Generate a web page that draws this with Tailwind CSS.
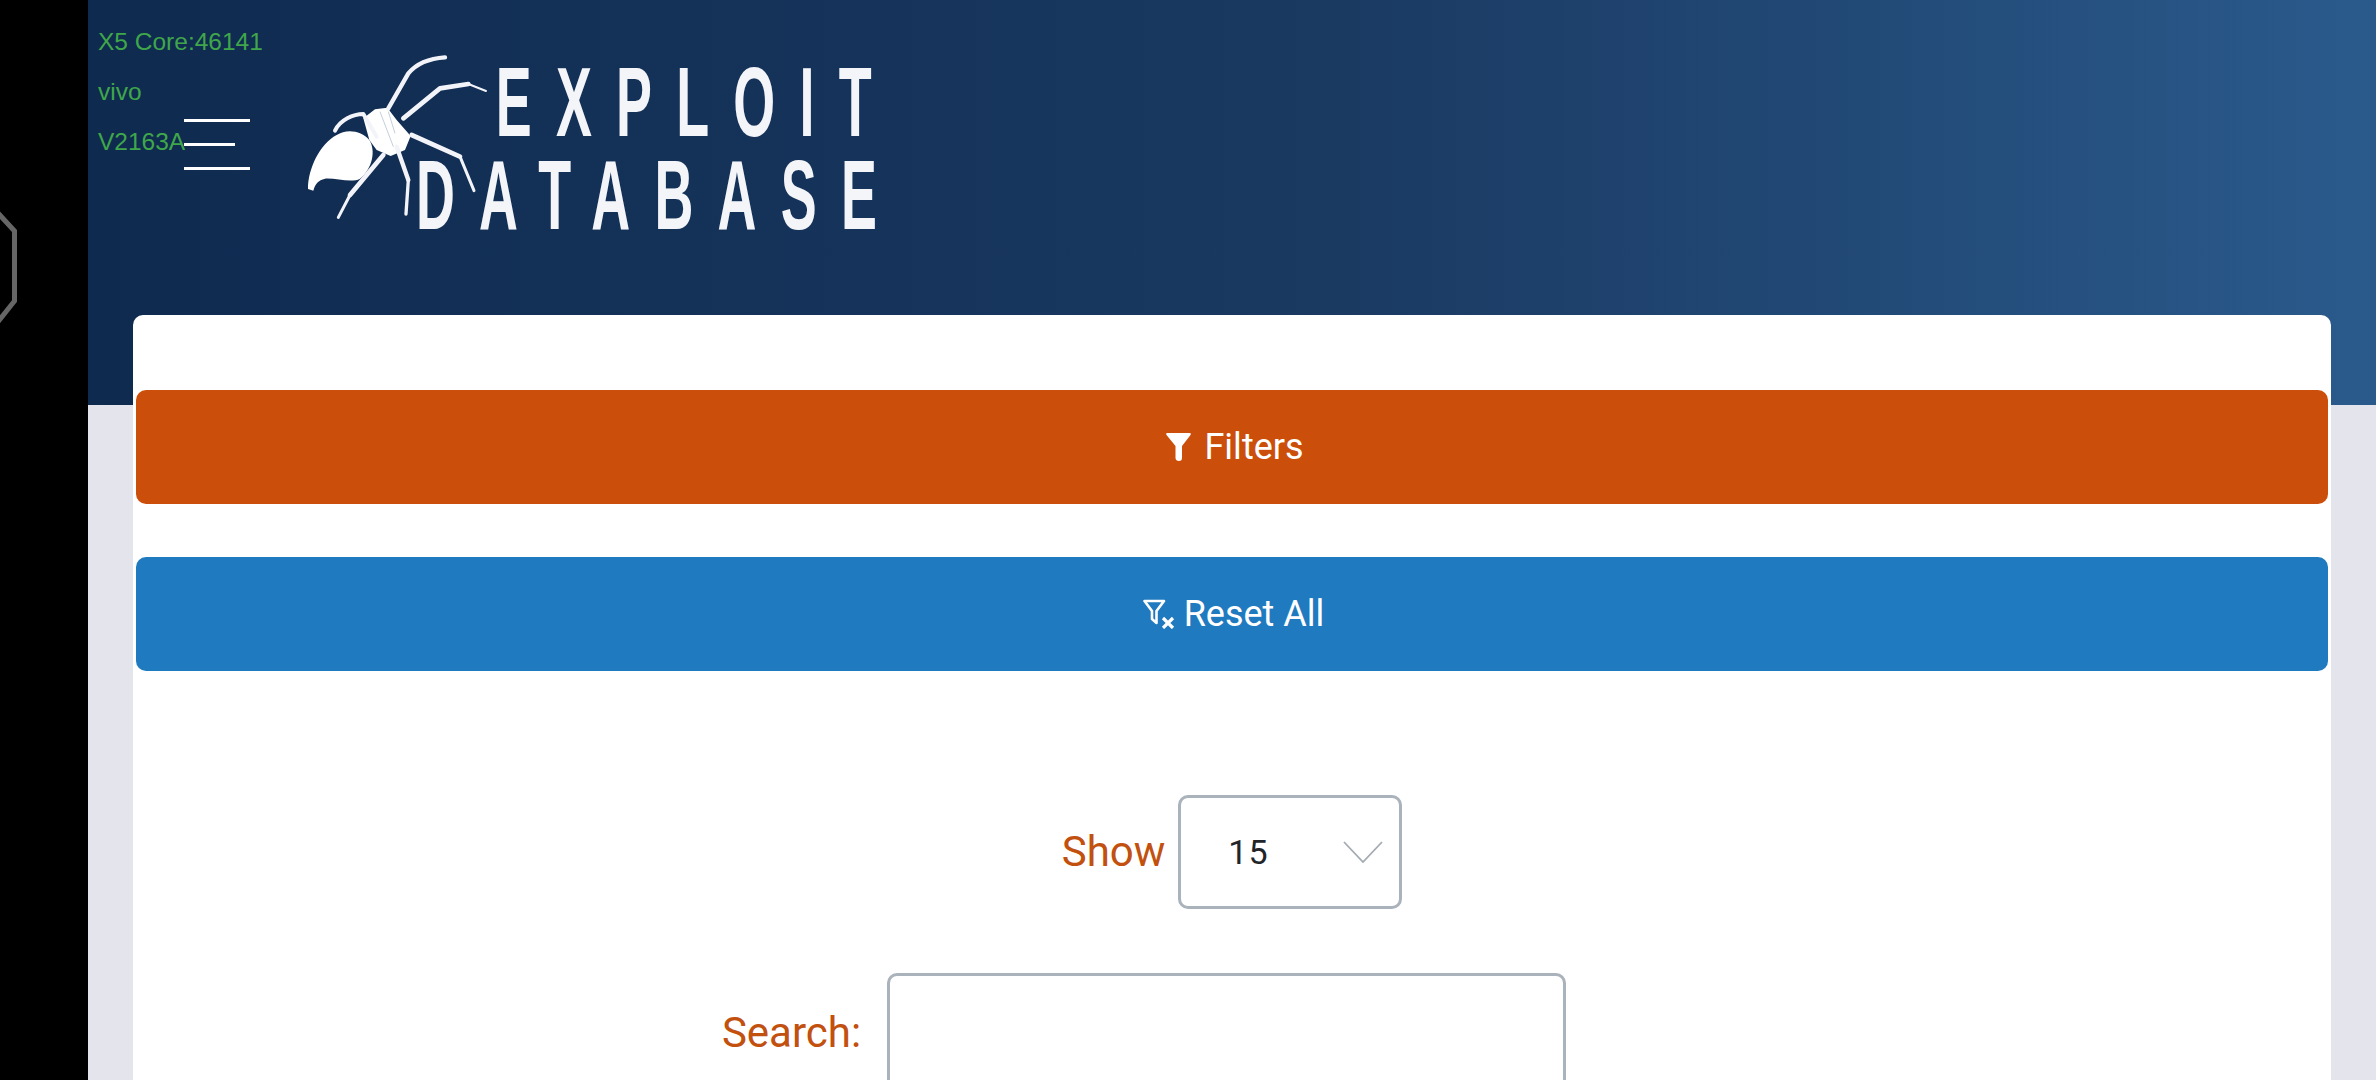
<!doctype html>
<html>
<head>
<meta charset="utf-8">
<script src="https://cdn.jsdelivr.net/npm/@tailwindcss/browser@4"></script>
</head>
<body class="bg-black">
<div class="relative flex h-[1080px] w-[2376px] overflow-hidden bg-black font-['Roboto',sans-serif]">
  <aside class="relative w-[88px] shrink-0 bg-black">
    <svg class="absolute left-0 top-[207px]" width="20" height="125" viewBox="0 0 20 125" fill="none">
      <path d="M-3 5 L14.500 24 L14.500 94 L-3 116" stroke="#666" stroke-width="5"/>
    </svg>
  </aside>
  <main class="relative flex-1 bg-[#e4e5ec]">
    <header class="relative h-[405px] bg-gradient-to-r from-[#0f2a4f] via-[#1a3a62] via-55% to-[#2a5a8c]">
      <div class="absolute left-[10px] top-[30px] flex flex-col gap-[26px] font-['Liberation_Sans',sans-serif] text-[24.5px] leading-[24px] text-[#3fa64a]">
        <span>X5 Core:46141</span>
        <span>vivo</span>
        <span>V2163A</span>
      </div>
      <button class="absolute left-[96px] top-[119px] flex h-[51px] w-[66px] flex-col justify-between">
        <span class="h-[3px] w-[66px] bg-white"></span>
        <span class="h-[3px] w-[51px] bg-white"></span>
        <span class="h-[3px] w-[66px] bg-white"></span>
      </button>
      <svg class="absolute left-[192px] top-[40px]" width="240" height="200" viewBox="0 0 720 600" fill="none">
        <path d="M84 447 C84 385 120 312 170 285 C200 265 245 272 268 300 C288 332 278 385 240 416 C215 430 170 414 135 416 C115 420 105 432 100 452 Z" fill="#fff"/>
        <path d="M250 235 L285 208 L322 203 L350 240 L392 288 L375 330 L332 348 L290 330 L268 300 Z" fill="#fff"/>
        <g stroke="#f3f4f9" stroke-linecap="round" stroke-linejoin="round">
          <path d="M325 205 L385 100 C410 70 450 55 495 52" stroke-width="13"/>
          <path d="M370 235 L480 145 L565 132" stroke-width="14"/>
          <path d="M565 132 L618 153" stroke-width="6"/>
          <path d="M165 272 C180 240 220 222 250 222 L290 290" stroke-width="12"/>
          <path d="M395 285 L540 350" stroke-width="14"/>
          <path d="M540 350 L582 452" stroke-width="9"/>
          <path d="M350 320 L385 420" stroke-width="13"/>
          <path d="M385 420 L378 522" stroke-width="10"/>
          <path d="M310 345 L210 465" stroke-width="14"/>
          <path d="M210 465 L175 532" stroke-width="9"/>
        </g>
        <path d="M300 215 L340 320 M325 215 L345 280" stroke="#c5cfdd" stroke-width="3"/>
      </svg>
      <div class="absolute left-[328px] top-[56px] flex origin-left scale-x-[0.55] flex-col font-['Liberation_Sans',sans-serif] text-[98px] font-bold leading-[93px] tracking-[44px] text-[#f4f5f9] whitespace-nowrap">
        <span class="ml-[145px]">EXPLOIT</span>
        <span>DATABASE</span>
      </div>
    </header>
    <section class="relative mx-[45px] -mt-[90px] h-[800px] rounded-[10px] bg-white px-[3px] pt-[75px]">
      <div class="flex flex-col gap-[53px]">
        <button class="flex h-[114px] items-center justify-center gap-[13px] rounded-[10px] bg-[#cb4f0a] pl-[6px] text-[36px] text-white">
          <svg width="25" height="28" viewBox="0 0 25 28"><path d="M1 0 H24 C25 0 25 1 24.500 2 L16 13 V25 C16 27 15 28 13 28 C11 28 9.500 27 9.500 25 V13 L0.500 2 C0 1 0 0 1 0 Z" fill="#fff"/></svg>
          <span>Filters</span>
        </button>
        <button class="flex h-[114px] items-center justify-center gap-[9px] rounded-[10px] bg-[#1f7abf] pl-[3px] text-[36px] text-white">
          <svg width="32" height="30" viewBox="0 0 32 30" fill="none" stroke="#fff"><path d="M1.500 2 H21 L13.500 12 V24 L9 20 V12 Z" stroke-width="2.600" stroke-linejoin="round"/><path d="M20 19 L30 29 M30 19 L20 29" stroke-width="3.200"/></svg>
          <span>Reset All</span>
        </button>
      </div>
      <div class="mt-[124px] flex items-center justify-center gap-[13px]">
        <label class="text-[42px] leading-[50px] text-[#c2500f]">Show</label>
        <div class="flex h-[114px] w-[224px] items-center justify-between rounded-[10px] border-[3px] border-[#aab2bb] pl-[47px] pr-[16px]">
          <span class="text-[34px] tracking-[1px] text-[#212529]">15</span>
          <svg width="40" height="22" viewBox="0 0 40 22" fill="none"><path d="M1 1 L20 21 L39 1" stroke="#a4abb2" stroke-width="1.800"/></svg>
        </div>
      </div>
      <div class="mt-[64px] flex items-start justify-center gap-[26px] pr-[176px]">
        <label class="mt-[35px] text-[42px] leading-[50px] text-[#c2500f]">Search:</label>
        <div class="h-[120px] w-[679px] rounded-[10px] border-[3px] border-[#aab2bb]"></div>
      </div>
    </section>
  </main>
</div>
</body>
</html>
